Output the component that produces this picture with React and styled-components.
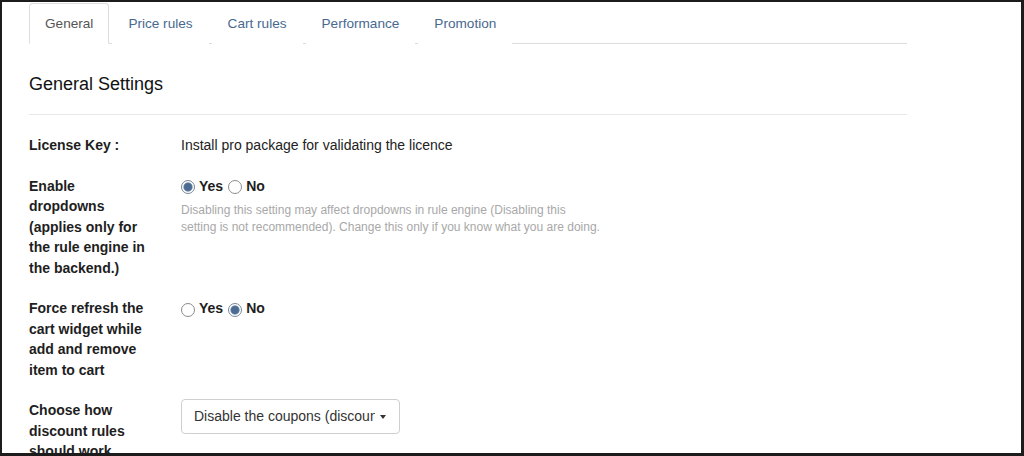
import React from 'react';
import styled, { createGlobalStyle } from 'styled-components';

const GlobalStyle = createGlobalStyle`
  html, body {
    margin: 0;
    padding: 0;
    background: #ffffff;
  }
  body {
    font-family: "Liberation Sans", Arial, Helvetica, sans-serif;
    color: #222222;
  }
  * { box-sizing: border-box; }
`;

const Frame = styled.div`
  width: 1024px;
  height: 456px;
  overflow: hidden;
  background: #ffffff;
  border-style: solid;
  border-color: #1c1c1c;
  border-width: 2px 3px 3px 2px;
`;

const Content = styled.div`
  width: 878px;
  margin-left: 27px;
`;

const TabBar = styled.ul`
  display: flex;
  list-style: none;
  margin: 0;
  padding: 1px 0 0;
  height: 42px;
  border-bottom: 1px solid #dddddd;
`;

const Tab = styled.li`
  height: 41px;
  padding: 0 15px 1px;
  margin-right: 3px;
  display: flex;
  align-items: center;
  font-size: 13.6px;
  color: ${p => (p.active ? '#555555' : '#48698f')};
  background: #ffffff;
  border: 1px solid ${p => (p.active ? '#dddddd' : 'transparent')};
  border-bottom-color: transparent;
  border-radius: 4px 4px 0 0;
  margin-bottom: -1px;
`;

const Heading = styled.h2`
  margin: 30px 0 0;
  font-size: 18px;
  line-height: 20px;
  font-weight: 400;
  color: #111111;
`;

const Divider = styled.hr`
  margin: 20px 0 10px;
  border: 0;
  border-top: 1px solid #e8e8e8;
`;

const Row = styled.div`
  display: grid;
  grid-template-columns: 152px 1fr;
  padding: 10px 0;
  align-items: start;
`;

const Label = styled.div`
  font-size: 14px;
  font-weight: 700;
  line-height: 20.5px;
  color: #1e1e1e;
  padding-right: 30px;
`;

const Value = styled.div`
  font-size: 14px;
  line-height: 20.5px;
  color: #222222;
`;

const RadioGroup = styled.div`
  display: flex;
  align-items: center;
  height: 20.5px;
`;

const RadioOption = styled.label`
  display: inline-flex;
  align-items: center;
  font-weight: 700;
  font-size: 14px;
  margin-right: 5px;
  color: #1e1e1e;
`;

const RadioMark = styled.span`
  width: 14px;
  height: 14px;
  border-radius: 50%;
  margin: 3px 4px 0 0;
  border: 1px solid ${p => (p.checked ? '#7a8796' : '#8c8c8c')};
  background: ${p =>
    p.checked
      ? 'radial-gradient(circle, #4b6b92 0, #4b6b92 3.4px, #6d88a8 4.2px, #ffffff 5px)'
      : '#ffffff'};
`;

const Help = styled.p`
  margin: 6px 0 0;
  max-width: 421px;
  font-size: 12px;
  line-height: 17px;
  color: #a8a8a8;
`;

const Select = styled.div`
  display: flex;
  align-items: center;
  width: 219px;
  height: 35px;
  margin-top: -1px;
  padding: 0 12px;
  border: 1px solid #cfcfcf;
  border-radius: 4px;
  background: #ffffff;
  font-size: 14px;
  color: #333333;
`;

const SelectText = styled.span`
  flex: 0 0 181px;
  overflow: hidden;
  white-space: nowrap;
`;

const Caret = styled.span`
  flex: 0 0 auto;
  width: 0;
  height: 0;
  margin-left: 5px;
  border-left: 3.5px solid transparent;
  border-right: 3.5px solid transparent;
  border-top: 4px solid #333333;
`;

function Radio({ name, checked }) {
  return (
    <RadioOption>
      <RadioMark checked={checked} />
      {name}
    </RadioOption>
  );
}

const tabs = ['General', 'Price rules', 'Cart rules', 'Performance', 'Promotion'];

export default function App() {
  return (
    <>
      <GlobalStyle />
      <Frame>
        <Content>
          <TabBar>
            {tabs.map((t, i) => (
              <Tab key={t} active={i === 0}>{t}</Tab>
            ))}
          </TabBar>

          <Heading>General Settings</Heading>
          <Divider />

          <Row>
            <Label>License Key :</Label>
            <Value>Install pro package for validating the licence</Value>
          </Row>

          <Row>
            <Label>Enable dropdowns (applies only for the rule engine in the backend.)</Label>
            <Value>
              <RadioGroup>
                <Radio name="Yes" checked />
                <Radio name="No" />
              </RadioGroup>
              <Help>
                Disabling this setting may affect dropdowns in rule engine (Disabling this setting is not recommended). Change this only if you know what you are doing.
              </Help>
            </Value>
          </Row>

          <Row>
            <Label>Force refresh the cart widget while add and remove item to cart</Label>
            <Value>
              <RadioGroup>
                <Radio name="Yes" />
                <Radio name="No" checked />
              </RadioGroup>
            </Value>
          </Row>

          <Row>
            <Label>Choose how discount rules should work</Label>
            <Value>
              <Select>
                <SelectText>Disable the coupons (discount rules will work)</SelectText>
                <Caret />
              </Select>
            </Value>
          </Row>
        </Content>
      </Frame>
    </>
  );
}
